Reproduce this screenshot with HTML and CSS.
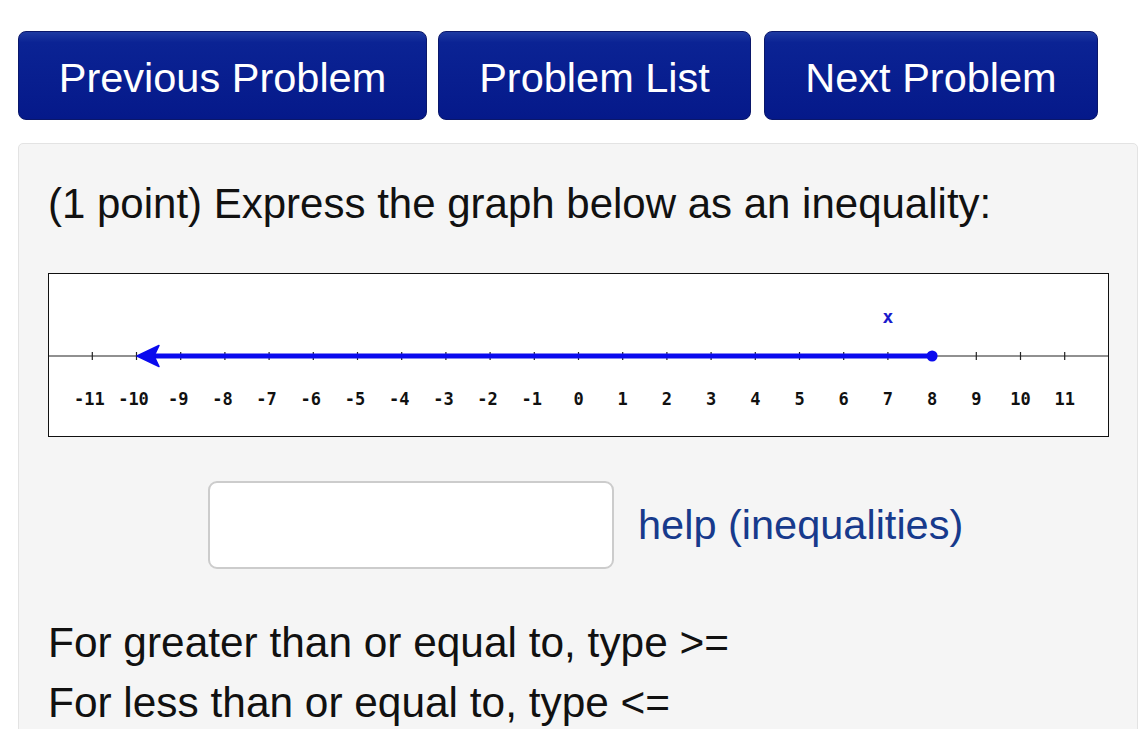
FILE: index.html
```html
<!DOCTYPE html>
<html>
<head>
<meta charset="utf-8">
<link rel="stylesheet" href="styles.css">
</head>
<body>
<div class="nav">
  <a class="btn btn-prev">Previous Problem</a>
  <a class="btn btn-list">Problem List</a>
  <a class="btn btn-next">Next Problem</a>
</div>
<div class="panel">
  <p class="question">(1 point) Express the graph below as an inequality:</p>
  <div class="graph">
    <svg width="1059" height="162" viewBox="0 0 1059 162">
      <line x1="0" y1="82" x2="1059" y2="82" stroke="#222" stroke-width="1.2"/>
      <g stroke="#222" stroke-width="1.2">
        <line x1="43.3" y1="78" x2="43.3" y2="86"/>
        <line x1="87.5" y1="78" x2="87.5" y2="86"/>
        <line x1="131.7" y1="78" x2="131.7" y2="86"/>
        <line x1="175.9" y1="78" x2="175.9" y2="86"/>
        <line x1="220.1" y1="78" x2="220.1" y2="86"/>
        <line x1="264.3" y1="78" x2="264.3" y2="86"/>
        <line x1="308.5" y1="78" x2="308.5" y2="86"/>
        <line x1="352.7" y1="78" x2="352.7" y2="86"/>
        <line x1="396.9" y1="78" x2="396.9" y2="86"/>
        <line x1="441.1" y1="78" x2="441.1" y2="86"/>
        <line x1="485.3" y1="78" x2="485.3" y2="86"/>
        <line x1="529.5" y1="78" x2="529.5" y2="86"/>
        <line x1="573.7" y1="78" x2="573.7" y2="86"/>
        <line x1="617.9" y1="78" x2="617.9" y2="86"/>
        <line x1="662.1" y1="78" x2="662.1" y2="86"/>
        <line x1="706.3" y1="78" x2="706.3" y2="86"/>
        <line x1="750.5" y1="78" x2="750.5" y2="86"/>
        <line x1="794.7" y1="78" x2="794.7" y2="86"/>
        <line x1="838.9" y1="78" x2="838.9" y2="86"/>
        <line x1="883.1" y1="78" x2="883.1" y2="86"/>
        <line x1="927.3" y1="78" x2="927.3" y2="86"/>
        <line x1="971.5" y1="78" x2="971.5" y2="86"/>
        <line x1="1015.7" y1="78" x2="1015.7" y2="86"/>
      </g>
      <line x1="102" y1="82" x2="883.1" y2="82" stroke="#0a0aee" stroke-width="5"/>
      <path d="M88 82 L110 71.5 L105 82 L110 92.5 Z" fill="#0a0aee" stroke="#0a0aee" stroke-width="1.5" stroke-linejoin="round"/>
      <circle cx="883.1" cy="82" r="5.5" fill="#0a0aee"/>
      <text x="838.9" y="49" class="mark">x</text>
      <g class="labels">
        <text x="40.3" y="131">-11</text>
        <text x="84.5" y="131">-10</text>
        <text x="129.2" y="131">-9</text>
        <text x="173.4" y="131">-8</text>
        <text x="217.6" y="131">-7</text>
        <text x="261.8" y="131">-6</text>
        <text x="306" y="131">-5</text>
        <text x="350.2" y="131">-4</text>
        <text x="394.4" y="131">-3</text>
        <text x="438.6" y="131">-2</text>
        <text x="482.8" y="131">-1</text>
        <text x="529.5" y="131">0</text>
        <text x="573.7" y="131">1</text>
        <text x="617.9" y="131">2</text>
        <text x="662.1" y="131">3</text>
        <text x="706.3" y="131">4</text>
        <text x="750.5" y="131">5</text>
        <text x="794.7" y="131">6</text>
        <text x="838.9" y="131">7</text>
        <text x="883.1" y="131">8</text>
        <text x="927.3" y="131">9</text>
        <text x="971.5" y="131">10</text>
        <text x="1015.7" y="131">11</text>
      </g>
    </svg>
  </div>
  <div class="answer-row">
    <div class="answer-box"></div>
    <a class="help">help (inequalities)</a>
  </div>
  <p class="hint">For greater than or equal to, type &gt;=<br>For less than or equal to, type &lt;=</p>
</div>
</body>
</html>
```

FILE: styles.css
```css
html, body {
  margin: 0;
  padding: 0;
  background: #ffffff;
  font-family: "Liberation Sans", Arial, sans-serif;
  color: #111111;
  overflow: hidden;
}

.nav {
  display: flex;
  gap: 11px;
  padding: 31px 0 0 18px;
}

.btn {
  display: flex;
  align-items: center;
  justify-content: center;
  height: 89px;
  box-sizing: border-box;
  padding-top: 4px;
  border: 1px solid #0a176a;
  border-radius: 8px;
  background: linear-gradient(to bottom, #1e3aa2 0%, #0b2394 12%, #05198a 100%);
  color: #ffffff;
  font-size: 41.5px;
}

.btn-prev { width: 409px; }
.btn-list { width: 313px; }
.btn-next { width: 334px; margin-left: 2px; }

.panel {
  margin: 23px 10px 0 18px;
  width: 1120px;
  box-sizing: border-box;
  background: #f5f5f5;
  border: 1px solid #e3e3e3;
  border-radius: 5px;
  padding: 37px 29px 40px 29px;
  height: 700px;
}

.question {
  margin: 0;
  font-size: 42px;
  line-height: 46px;
}

.graph {
  margin-top: 46px;
  width: 1061px;
  height: 164px;
  box-sizing: border-box;
  border: 1px solid #111111;
  background: #ffffff;
}

.graph svg {
  display: block;
}

.labels text {
  font-family: "DejaVu Sans Mono", "Liberation Mono", monospace;
  font-weight: bold;
  font-size: 17px;
  fill: #111111;
  text-anchor: middle;
}

.mark {
  font-family: "DejaVu Sans Mono", monospace;
  font-weight: bold;
  font-size: 18px;
  fill: #1a1acc;
  text-anchor: middle;
}

.answer-row {
  display: flex;
  align-items: center;
  gap: 24px;
  margin-top: 44px;
  padding-left: 160px;
}

.answer-box {
  width: 406px;
  height: 88px;
  box-sizing: border-box;
  background: #ffffff;
  border: 2px solid #cccccc;
  border-radius: 9px;
}

.help {
  font-size: 41.5px;
  color: #173a8c;
}

.hint {
  margin: 44px 0 0 0;
  font-size: 42.4px;
  line-height: 60px;
}
```
